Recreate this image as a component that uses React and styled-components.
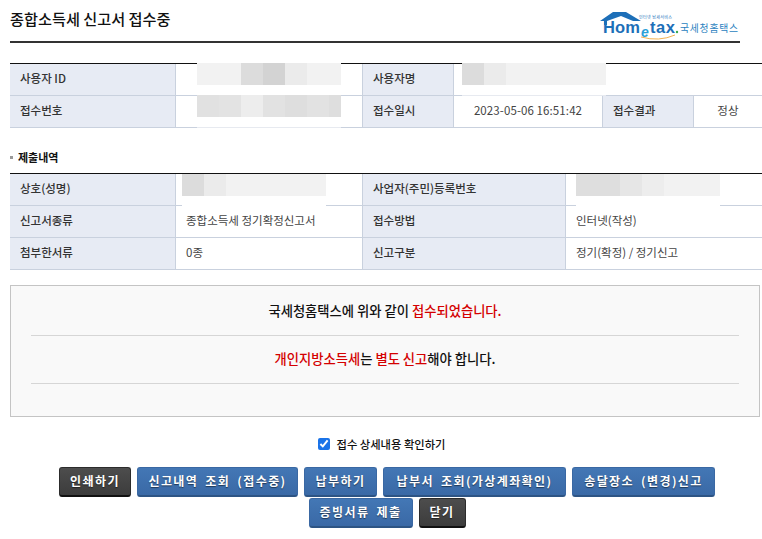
import React from "react";
import styled, { createGlobalStyle } from "styled-components";

const GlobalStyle = createGlobalStyle`
    html, body {
        margin: 0;
        padding: 0;
        background: #fff;
        overflow: hidden;
    }
    body {
        font-family: "Noto Sans CJK KR", "Liberation Sans", sans-serif;
        color: #222;
    }
`

const Page = styled.div`
    width: 762px;
    height: 539px;
    overflow: hidden;
    padding-left: 10px;
    box-sizing: border-box;
`
const Header = styled.div`
    display: flex;
    justify-content: space-between;
    align-items: flex-start;
    width: 730px;
    height: 43px;
    box-sizing: border-box;
    border-bottom: 2px solid #333;
`
const Title = styled.h1`
    margin: 7px 0 0;
    font-size: 15.2px;
    line-height: 22px;
    font-weight: 500;
    color: #111;
`
const Logo = styled.div`
    display: flex;
    margin: 11px 1px 0 0;
`
const InfoTable = styled.div`
    position: relative;
    display: grid;
    grid-template-columns: ${props => props.$columns};
    grid-auto-rows: 32px;
    width: 752px;
    margin-top: ${props => props.$top};
    border-top: 1px solid #111;
    box-sizing: border-box;
`
const Label = styled.div`
    display: flex;
    align-items: center;
    padding: 0 0 3px 10px;
    background: #e7ebf4;
    border-right: 1px solid #c9d1de;
    border-bottom: 1px solid #c9d1de;
    font-size: 11.5px;
    font-weight: 500;
    color: #333;
`
const Value = styled.div`
    display: flex;
    align-items: center;
    justify-content: ${props => (props.$center ? "center" : "flex-start")};
    grid-column: ${props => props.$span || "auto"};
    padding: 0 0 3px ${props => (props.$center ? "0" : "10px")};
    border-right: ${props => (props.$edge ? "0" : "1px solid #c9d1de")};
    border-bottom: 1px solid #c9d1de;
    font-size: 11.5px;
    letter-spacing: ${props => (props.$center ? "0.1px" : "0")};
    color: #444;
`
const Masked = styled.div`
    position: absolute;
    top: ${props => props.$top}px;
    left: ${props => props.$left}px;
    width: 144px;
    height: 32px;
    background: #fff;
    display: flex;
    align-items: flex-start;
    box-shadow: 0 1px 0 rgba(255, 255, 255, 0.55);
`
const Mosaic = styled.span`
    width: ${props => props.$width}px;
    height: 22px;
    background: ${props => props.$color};
`
const SectionTitle = styled.h2`
    display: flex;
    align-items: center;
    gap: 5px;
    margin: 20px 0 0;
    height: 18px;
    font-size: 11px;
    font-weight: 700;
    color: #111;
    &::before {
        content: "";
        width: 3px;
        height: 3px;
        background: #999;
    }
`
const MessageBox = styled.div`
    width: 750px;
    height: 132px;
    margin-top: 15px;
    padding: 0 20px;
    box-sizing: border-box;
    background: #f9f9f9;
    border: 1px solid #c4c4c4;
    display: flex;
    flex-direction: column;
`
const Message = styled.p`
    margin: 0;
    height: ${props => (props.$first ? "50px" : "48px")};
    padding-bottom: ${props => (props.$first ? "1px" : "2px")};
    box-sizing: border-box;
    display: flex;
    align-items: center;
    justify-content: center;
    white-space: pre;
    border-bottom: 1px solid #d6d6d6;
    font-size: 13.3px;
    font-weight: 500;
    color: #111;
`
const Red = styled.span`
    color: #d40000;
`
const CheckRow = styled.label`
    display: flex;
    align-items: center;
    justify-content: center;
    gap: 6px;
    width: 744px;
    height: 18px;
    margin-top: 18px;
    font-size: 11.3px;
    font-weight: 500;
    color: #111;
`
const Check = styled.input`
    width: 12px;
    height: 12px;
    margin: 0;
    accent-color: #1a73e8;
`
const Buttons = styled.div`
    display: flex;
    flex-wrap: wrap;
    justify-content: center;
    gap: 1px 6px;
    width: 754px;
    margin-top: 14px;
`
const Button = styled.button`
    height: 30px;
    width: ${props => props.$width}px;
    padding: 0 0 2px;
    border: 1px solid ${props => (props.$dark ? "#2c2c2c" : "#3a68a3")};
    border-bottom: 2px solid ${props => (props.$dark ? "#111" : "#2d5484")};
    border-radius: 3px;
    background: ${props => (props.$dark ? "linear-gradient(#4d4d4d, #3c3c3c)" : "linear-gradient(#4377b5, #3a69a6)")};
    color: #fff;
    font-family: "Noto Sans CJK KR", sans-serif;
    font-size: 12px;
    font-weight: 700;
    letter-spacing: 1.4px;
    word-spacing: 3px;
    text-shadow: 0 1px 1px rgba(0, 0, 0, 0.5);
    white-space: pre;
`

const HometaxLogo = () => (
    <svg width="140" height="32" viewBox="0 0 140 32">
        <path d="M1 10 L14 1 H27 L42 10 H34 L22 5 L8 10 V14 H5 V10 Z" fill="#1d6fb8" />
        <text x="40" y="7.5" fontSize="4" textLength="33" fill="#1d6fb8" fontFamily="Noto Sans CJK KR">인터넷 납세서비스</text>
        <text x="4" y="22" fontSize="16.5" textLength="37" fontWeight="700" fill="#1d6fb8" fontFamily="Liberation Sans">Hom</text>
        <text x="42" y="26" fontSize="14" fontStyle="italic" fontWeight="700" fill="#2aa0d8" fontFamily="Liberation Sans">e</text>
        <text x="51" y="22" fontSize="16.5" textLength="25" fontWeight="700" fill="#1d6fb8" fontFamily="Liberation Sans">tax</text>
        <circle cx="78" cy="21" r="1.2" fill="#3aa84a" />
        <path d="M42 26 Q60 31 76 24" fill="none" stroke="#f0a83c" strokeWidth="0.9" />
        <text x="81" y="21" fontSize="9.8" textLength="58" fontWeight="400" fill="#2b7fc0" fontFamily="Noto Sans CJK KR">국세청홈택스</text>
    </svg>
)

const App = () => {
    return (
        <Page>
            <GlobalStyle />
            <Header>
                <Title>종합소득세 신고서 접수중</Title>
                <Logo><HometaxLogo /></Logo>
            </Header>

            <InfoTable $top="20px" $columns="166px 187px 91px 149px 91px 68px">
                <Label>사용자 ID</Label>
                <Value />
                <Label>사용자명</Label>
                <Value $span="span 3" $edge />
                <Label>접수번호</Label>
                <Value />
                <Label>접수일시</Label>
                <Value $center>2023-05-06 16:51:42</Value>
                <Label>접수결과</Label>
                <Value $center $edge>정상</Value>
                <Masked $top={-1} $left={187}>
                    <Mosaic $width={44} $color="#f2f2f2" />
                    <Mosaic $width={22} $color="#dcdcdc" />
                    <Mosaic $width={22} $color="#d3d3d3" />
                    <Mosaic $width={22} $color="#ebebeb" />
                    <Mosaic $width={34} $color="#f2f2f2" />
                </Masked>
                <Masked $top={31} $left={187}>
                    <Mosaic $width={22} $color="#e1e1e1" />
                    <Mosaic $width={22} $color="#e3e3e3" />
                    <Mosaic $width={22} $color="#ededed" />
                    <Mosaic $width={22} $color="#e2e2e2" />
                    <Mosaic $width={22} $color="#dedede" />
                    <Mosaic $width={22} $color="#e2e2e2" />
                    <Mosaic $width={12} $color="#dedede" />
                </Masked>
                <Masked $top={-1} $left={452}>
                    <Mosaic $width={22} $color="#dcdcdc" />
                    <Mosaic $width={22} $color="#ebebeb" />
                    <Mosaic $width={100} $color="#f2f2f2" />
                </Masked>
            </InfoTable>

            <SectionTitle>제출내역</SectionTitle>

            <InfoTable $top="7px" $columns="166px 187px 203px 196px">
                <Label>상호(성명)</Label>
                <Value />
                <Label>사업자(주민)등록번호</Label>
                <Value $edge />
                <Label>신고서종류</Label>
                <Value>종합소득세 정기확정신고서</Value>
                <Label>접수방법</Label>
                <Value $edge>인터넷(작성)</Value>
                <Label>첨부한서류</Label>
                <Value>0종</Value>
                <Label>신고구분</Label>
                <Value $edge>정기(확정) / 정기신고</Value>
                <Masked $top={0} $left={172}>
                    <Mosaic $width={22} $color="#dcdcdc" />
                    <Mosaic $width={22} $color="#ebebeb" />
                    <Mosaic $width={100} $color="#f2f2f2" />
                </Masked>
                <Masked $top={0} $left={566}>
                    <Mosaic $width={44} $color="#dedede" />
                    <Mosaic $width={22} $color="#e6e6e6" />
                    <Mosaic $width={22} $color="#ededed" />
                    <Mosaic $width={34} $color="#f2f2f2" />
                    <Mosaic $width={22} $color="#f2f2f2" />
                </Masked>
            </InfoTable>

            <MessageBox>
                <Message $first>국세청홈택스에 위와 같이 <Red>접수되었습니다.</Red></Message>
                <Message><Red>개인지방소득세</Red>는 <Red>별도 신고</Red>해야 합니다.</Message>
            </MessageBox>

            <CheckRow>
                <Check type="checkbox" defaultChecked />
                접수 상세내용 확인하기
            </CheckRow>

            <Buttons>
                <Button $dark $width={72}>인쇄하기</Button>
                <Button $width={161}>신고내역 조회 (접수중)</Button>
                <Button $width={73}>납부하기</Button>
                <Button $width={183}>납부서 조회(가상계좌확인)</Button>
                <Button $width={143}>송달장소 (변경)신고</Button>
                <Button $width={104}>증빙서류 제출</Button>
                <Button $dark $width={47}>닫기</Button>
            </Buttons>
        </Page>
    );
};

export default App;
